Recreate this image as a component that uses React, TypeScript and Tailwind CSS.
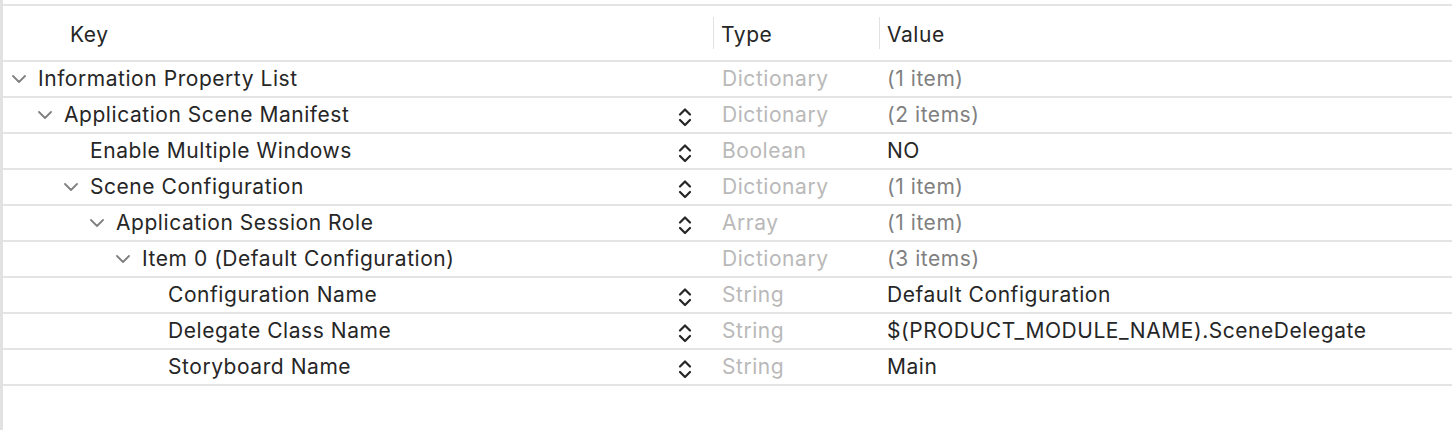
import React from 'react';

type Row = {
  key: string;
  level: number;
  open?: boolean;
  stepper?: boolean;
  type: string;
  value: string;
  muted?: boolean;
};

const rows: Row[] = [
  { key: 'Information Property List', level: 0, open: true, type: 'Dictionary', value: '(1 item)', muted: true },
  { key: 'Application Scene Manifest', level: 1, open: true, stepper: true, type: 'Dictionary', value: '(2 items)', muted: true },
  { key: 'Enable Multiple Windows', level: 2, stepper: true, type: 'Boolean', value: 'NO' },
  { key: 'Scene Configuration', level: 2, open: true, stepper: true, type: 'Dictionary', value: '(1 item)', muted: true },
  { key: 'Application Session Role', level: 3, open: true, stepper: true, type: 'Array', value: '(1 item)', muted: true },
  { key: 'Item 0 (Default Configuration)', level: 4, open: true, type: 'Dictionary', value: '(3 items)', muted: true },
  { key: 'Configuration Name', level: 5, stepper: true, type: 'String', value: 'Default Configuration' },
  { key: 'Delegate Class Name', level: 5, stepper: true, type: 'String', value: '$(PRODUCT_MODULE_NAME).SceneDelegate' },
  { key: 'Storyboard Name', level: 5, stepper: true, type: 'String', value: 'Main' },
];

const indents = ['pl-[9px]', 'pl-[35px]', 'pl-[61px]', 'pl-[87px]', 'pl-[113px]', 'pl-[139px]'];

const Chevron = () => (
  <svg width="14" height="8" viewBox="0 0 14 8" fill="none">
    <path d="M1 1L7 7L13 1" stroke="#818181" strokeWidth="1.8" strokeLinecap="round" strokeLinejoin="round" />
  </svg>
);

const Stepper = () => (
  <svg width="14" height="20" viewBox="0 0 14 20" fill="none">
    <path d="M2 7.5L7 2.5L12 7.5" stroke="#262626" strokeWidth="2.2" strokeLinecap="round" strokeLinejoin="round" />
    <path d="M2 13L7 18L12 13" stroke="#262626" strokeWidth="2.2" strokeLinecap="round" strokeLinejoin="round" />
  </svg>
);

const Line = () => <div className="h-[2px] bg-[#e4e4e4]" />;

const App: React.FC = () => {
  return (
    <div
      className="flex h-[430px] w-[1452px] bg-white text-[21px] tracking-[0.55px] text-[#262626]"
      style={{ fontFamily: 'Inter, "Noto Sans", sans-serif' }}
    >
      <div className="w-[3px] bg-[#e2e2e2]" />
      <div className="flex-1 pt-[4px]">
        <Line />
        <div className="flex h-[54px] items-center">
          <div className="w-[710px] pl-[67px] pt-[3px]">Key</div>
          <div className="flex w-[166px] items-center">
            <div className="h-[32px] w-px bg-[#e2e2e2]" />
            <span className="pl-[7px] pt-[3px]">Type</span>
          </div>
          <div className="flex flex-1 items-center">
            <div className="h-[32px] w-px bg-[#e2e2e2]" />
            <span className="pl-[7px] pt-[3px]">Value</span>
          </div>
        </div>
        <Line />
        {rows.map((r) => (
          <div key={r.key}>
            <div className="flex h-[34px] items-center">
              <div className={`flex w-[710px] items-center ${indents[r.level]}`}>
                <div className="flex w-[26px] items-center">{r.open && <Chevron />}</div>
                <span className="flex-1">{r.key}</span>
                <div className="mr-[21px] flex w-[14px] items-center pt-[3px]">{r.stepper && <Stepper />}</div>
              </div>
              <div className="w-[166px] pl-[9px] text-[#b9b9b9]">{r.type}</div>
              <div className={`flex-1 pl-[8px] ${r.muted ? 'text-[#808080]' : ''}`}>{r.value}</div>
            </div>
            <Line />
          </div>
        ))}
      </div>
    </div>
  );
};

export default App;
